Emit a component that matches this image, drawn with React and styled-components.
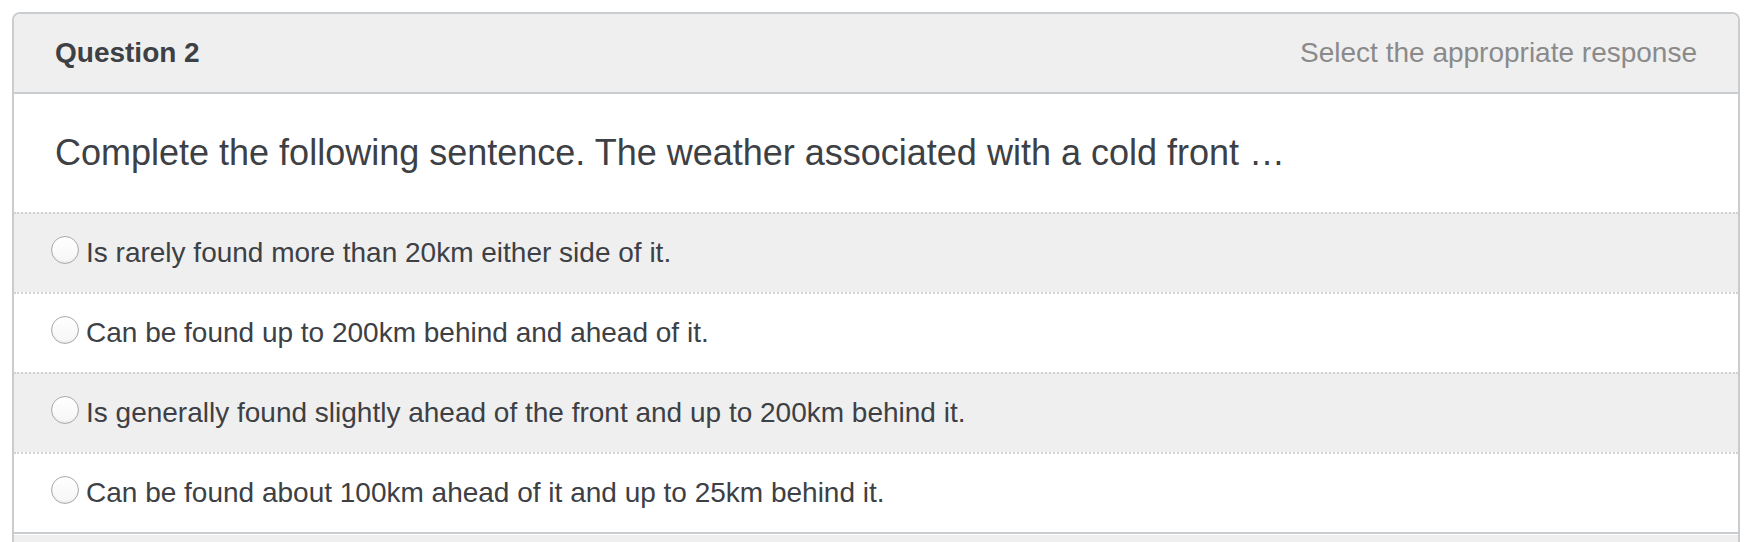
import React from "react";
import styled, { createGlobalStyle } from "styled-components";

const GlobalStyle = createGlobalStyle`
  html, body {
    margin: 0;
    padding: 0;
    overflow: hidden;
    background: #fff;
    font-family: "Liberation Sans", Arial, Helvetica, sans-serif;
  }
`;

const Page = styled.div`
  padding: 12px 12px 0 12px;
`;

// panel runs past the bottom of the frame, so no bottom edge is drawn
const Panel = styled.section`
  border: 2px solid #cacdd0;
  border-bottom: 0;
  border-radius: 8px 8px 0 0;
  overflow: hidden;
  color: #3d4044;
`;

const Header = styled.header`
  display: flex;
  align-items: center;
  justify-content: space-between;
  height: 78px;
  padding: 0 41px;
  background: #efefef;
  border-bottom: 2px solid #cacdd0;
`;

const Title = styled.h2`
  margin: 0;
  font-size: 28px;
  font-weight: bold;
  color: #3d4044;
`;

const Hint = styled.span`
  font-size: 28px;
  color: #8a8a8a;
`;

const Prompt = styled.div`
  display: flex;
  align-items: center;
  height: 118px;
  padding: 0 41px;
  font-size: 36px;
  background: #fff;
`;

const OptionList = styled.div`
  display: flex;
  flex-direction: column;
`;

const Option = styled.label`
  display: flex;
  align-items: center;
  gap: 7px;
  height: 78px;
  padding: 0 37px;
  font-size: 28px;
  border-top: 2px dotted #d2d2d2;
  background: ${({ $shaded }) => ($shaded ? "#efefef" : "#fff")};
  cursor: pointer;
`;

const Radio = styled.span`
  flex: none;
  box-sizing: border-box;
  width: 28px;
  height: 28px;
  margin-bottom: 6px;
  border-radius: 50%;
  border: 1.5px solid #ababab;
  background: linear-gradient(#ffffff, #f6f6f6);
  box-shadow: inset 0 -1px 2px rgba(0, 0, 0, 0.08);
`;

const Footer = styled.footer`
  height: 8px;
  border-top: 2px solid #cacdd0;
  box-shadow: inset 0 1px 0 #fff;
  background: #efefef;
`;

const options = [
  "Is rarely found more than 20km either side of it.",
  "Can be found up to 200km behind and ahead of it.",
  "Is generally found slightly ahead of the front and up to 200km behind it.",
  "Can be found about 100km ahead of it and up to 25km behind it.",
];

export default function App() {
  return (
    <Page>
      <GlobalStyle />
      <Panel>
        <Header>
          <Title>Question 2</Title>
          <Hint>Select the appropriate response</Hint>
        </Header>
        <Prompt>
          Complete the following sentence. The weather associated with a cold front …
        </Prompt>
        <OptionList>
          {options.map((text, i) => (
            <Option key={i} $shaded={i % 2 === 0}>
              <Radio />
              {text}
            </Option>
          ))}
        </OptionList>
        <Footer />
      </Panel>
    </Page>
  );
}
